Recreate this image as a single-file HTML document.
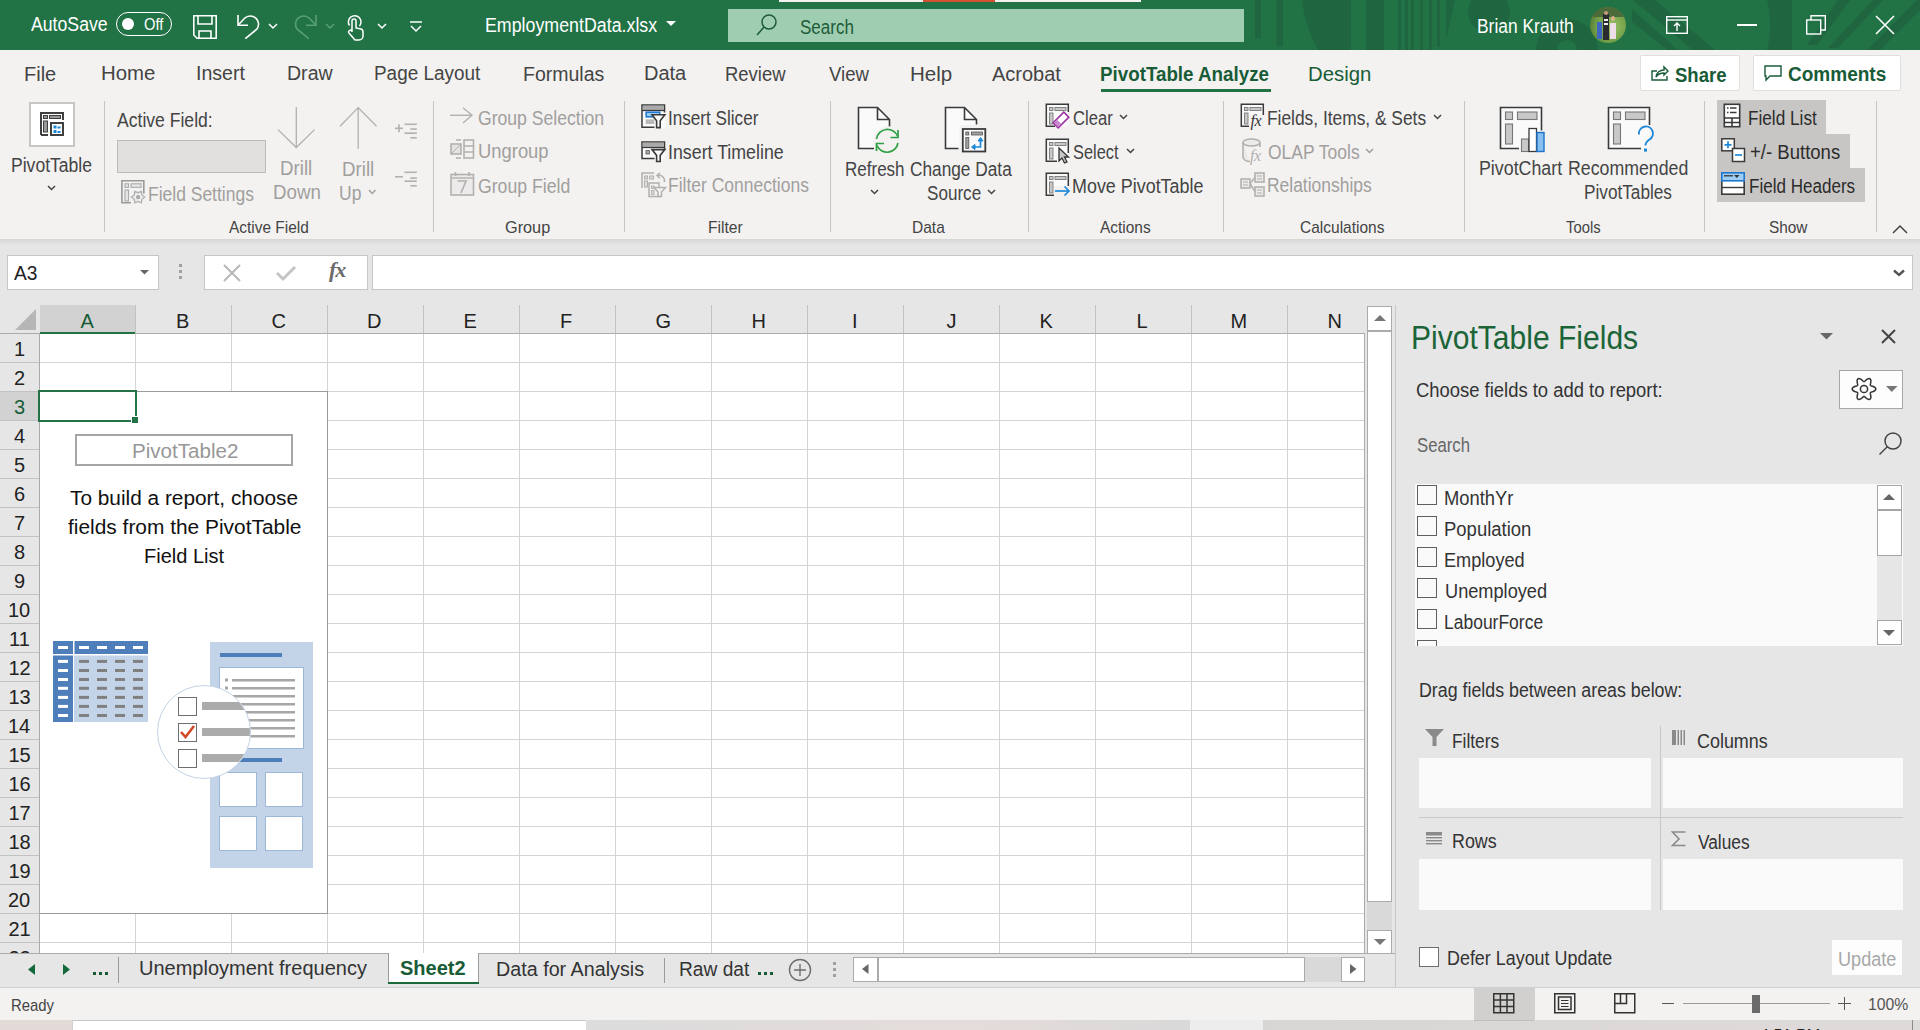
<!DOCTYPE html>
<html><head><meta charset="utf-8">
<style>
html,body{margin:0;padding:0;width:1920px;height:1030px;overflow:hidden;background:#f3f2f1;font-family:"Liberation Sans",sans-serif;}
.a{position:absolute;}
.t{position:absolute;white-space:nowrap;line-height:1;font-family:"Liberation Sans",sans-serif;}
svg{position:absolute;overflow:visible;}
</style></head><body>
<div class="a" style="left:0;top:0;width:1920px;height:50px;background:#217346;overflow:hidden">
<svg width="720" height="50" style="left:1200px;top:0">
 <g fill="#1f6640">
  <rect x="55" y="0" width="6" height="38"/><rect x="76.5" y="0" width="6.5" height="46"/>
  <path d="M102 0 H151 V50 H118 C110 35 104 18 102 0Z"/>
  <rect x="166" y="0" width="18" height="50"/>
  <rect x="198" y="0" width="3" height="50"/><rect x="205" y="0" width="3" height="50"/><rect x="211" y="0" width="3" height="50"/>
  <rect x="220" y="0" width="3" height="50"/><rect x="229" y="0" width="3" height="50"/><rect x="237" y="0" width="3" height="47"/>
  <path d="M246 0 H255 L246 40Z"/>
  <circle cx="289" cy="12" r="21"/>
  <path d="M367 50 m-31 0 a31 31 0 0 1 62 0 h-21 a10 10 0 0 0 -20 0Z"/>
  <path d="M433 0 H455 L515 50 H493Z"/>
  <path d="M432 9 L432 22 L467 50 L478 50Z"/>
  <path d="M567 0 H592 V50 H567 C571 34 571 16 567 0Z"/>
  <path d="M607 45 L617 45 L650 0 L638 0Z"/>
  <path d="M628 48 L638 48 L683 0 L673 0Z"/>
  <path d="M667 50 L680 50 L720 10 L720 0 L717 0Z"/>
 </g>
</svg>
<div class="t" style="left:31.00px;top:14px;font-size:20px;color:#fff;transform:scaleX(0.8837);transform-origin:0 0;">AutoSave</div><div class="a" style="left:116px;top:12px;width:54px;height:22px;border:1.3px solid #fff;border-radius:12px"></div>
<div class="a" style="left:122px;top:18px;width:12px;height:12px;border-radius:50%;background:#fff"></div><div class="t" style="left:144.14px;top:16px;font-size:17px;color:#fff;transform:scaleX(0.8636);transform-origin:0 0;">Off</div><svg width="24" height="24" style="left:193px;top:15px" fill="none" stroke="#fff" stroke-width="1.6">
 <path d="M0.8 0.8 H23.2 V23.2 H4 L0.8 20 Z"/><path d="M5 0.8 V9 H19 V0.8"/><path d="M6 23.2 V16 H18 V23.2"/>
</svg>
<svg width="24" height="24" style="left:236px;top:15px" fill="none" stroke="#fff" stroke-width="1.6">
 <path d="M2 0 V10.3 H12"/><path d="M2.5 9.8 L8.6 3.3 A8.2 8.2 0 0 1 20.8 14.2 L9.3 23.6"/>
</svg>
<svg width="10" height="6" style="left:268px;top:23px" fill="none" stroke="#fff" stroke-width="1.5"><path d="M1 1 L5 5 L9 1"/></svg>
<svg width="24" height="24" style="left:294px;top:15px" fill="none" stroke="#5a9e78" stroke-width="1.6">
 <path d="M22 0 V10.3 H12"/><path d="M21.5 9.8 L15.4 3.3 A8.2 8.2 0 0 0 3.2 14.2 L14.7 23.6"/>
</svg>
<svg width="10" height="6" style="left:325px;top:23px" fill="none" stroke="#5a9e78" stroke-width="1.5"><path d="M1 1 L5 5 L9 1"/></svg>
<svg width="20" height="26" style="left:346px;top:15px" fill="none" stroke="#fff" stroke-width="1.5">
 <path d="M3.5 10.5 A6.3 6.3 0 1 1 13.5 11"/><path d="M6 17 V6 A2 2 0 0 1 10 6 V13 L15 14 A3 3 0 0 1 17 17 V21 A4 4 0 0 1 13 25 H9 L3 18 A1.5 1.5 0 0 1 6 16"/>
</svg>
<svg width="10" height="6" style="left:377px;top:23px" fill="none" stroke="#fff" stroke-width="1.5"><path d="M1 1 L5 5 L9 1"/></svg>
<svg width="14" height="12" style="left:409px;top:21px" fill="none" stroke="#fff" stroke-width="1.5"><path d="M1 1 H13"/><path d="M2 5 L7 10 L12 5"/></svg>
<div class="t" style="left:485.22px;top:15px;font-size:20px;color:#fff;transform:scaleX(0.8901);transform-origin:0 0;">EmploymentData.xlsx</div><svg width="10" height="6" style="left:666px;top:21px"><path d="M0 0 H10 L5 5Z" fill="#fff"/></svg>
<div class="a" style="left:728px;top:9px;width:516px;height:33px;background:#9fcdb2"></div>
<svg width="22" height="22" style="left:756px;top:14px" fill="none" stroke="#1e5c38" stroke-width="1.5"><circle cx="13" cy="8" r="7"/><path d="M8 13 L1 21"/></svg>
<div class="t" style="left:800.15px;top:17px;font-size:20px;color:#1e5c38;transform:scaleX(0.8525);transform-origin:0 0;">Search</div><div class="a" style="left:779px;top:0;width:362px;height:2px;background:#f3f2f1"></div>
<div class="a" style="left:923px;top:0;width:72px;height:2px;background:#d35230"></div><div class="t" style="left:1477.26px;top:16px;font-size:20px;color:#fff;transform:scaleX(0.8704);transform-origin:0 0;">Brian Krauth</div><div class="a" style="left:1590px;top:7px;width:36px;height:36px;border-radius:50%;background:radial-gradient(circle at 60% 55%,#9cc56a,#6f9c45 55%,#3d5a2a);overflow:hidden">
 <div class="a" style="left:0;top:0;width:36px;height:10px;background:#4d6a3a"></div>
 <div class="a" style="left:13px;top:7px;width:6px;height:26px;background:#2a2a30"></div>
 <div class="a" style="left:14px;top:12px;width:4px;height:2px;background:#eee"></div><div class="a" style="left:14px;top:16px;width:4px;height:2px;background:#eee"></div>
 <div class="a" style="left:7px;top:15px;width:5px;height:17px;background:#3f66c0"></div>
 <div class="a" style="left:20px;top:16px;width:6px;height:16px;background:#ecdde6"></div>
 <div class="a" style="left:21px;top:9px;width:4px;height:5px;background:#d9b38c;border-radius:50%"></div>
 <div class="a" style="left:14px;top:4px;width:4px;height:4px;background:#c49a78;border-radius:50%"></div>
</div>
<svg width="22" height="18" style="left:1666px;top:16px" fill="none" stroke="#fff" stroke-width="1.4"><rect x="0.7" y="0.7" width="20.6" height="16.6"/><path d="M0.7 4 H21"/><path d="M11 15 V7 M8 10 L11 7 L14 10"/></svg>
<div class="a" style="left:1737px;top:24px;width:20px;height:1.5px;background:#fff"></div>
<svg width="20" height="20" style="left:1806px;top:15px" fill="none" stroke="#fff" stroke-width="1.4"><rect x="0.7" y="5" width="14" height="14"/><path d="M5 5 V0.7 H19.3 V15 H14.7"/></svg>
<svg width="20" height="20" style="left:1875px;top:15px" fill="none" stroke="#fff" stroke-width="1.6"><path d="M1 1 L19 19 M19 1 L1 19"/></svg>
</div>
<div class="a" style="left:0;top:50px;width:1920px;height:190px;background:#f3f2f1"></div><div class="t" style="left:24.00px;top:64px;font-size:20px;color:#444;">File</div><div class="t" style="left:100.96px;top:63px;font-size:20px;color:#444;transform:scaleX(1.0196);transform-origin:0 0;">Home</div><div class="t" style="left:196.04px;top:63px;font-size:20px;color:#444;transform:scaleX(0.9792);transform-origin:0 0;">Insert</div><div class="t" style="left:287.04px;top:63px;font-size:20px;color:#444;transform:scaleX(0.9778);transform-origin:0 0;">Draw</div><div class="t" style="left:374.11px;top:63px;font-size:20px;color:#444;transform:scaleX(0.9455);transform-origin:0 0;">Page Layout</div><div class="t" style="left:523.05px;top:64px;font-size:20px;color:#444;transform:scaleX(0.9753);transform-origin:0 0;">Formulas</div><div class="t" style="left:644.00px;top:63px;font-size:20px;color:#444;">Data</div><div class="t" style="left:725.16px;top:64px;font-size:20px;color:#444;transform:scaleX(0.9219);transform-origin:0 0;">Review</div><div class="t" style="left:829.00px;top:64px;font-size:20px;color:#444;transform:scaleX(0.9302);transform-origin:0 0;">View</div><div class="t" style="left:909.95px;top:64px;font-size:20px;color:#444;transform:scaleX(1.0263);transform-origin:0 0;">Help</div><div class="t" style="left:992.00px;top:64px;font-size:20px;color:#444;">Acrobat</div><div class="t" style="left:1307.97px;top:64px;font-size:20px;color:#185c37;transform:scaleX(1.0169);transform-origin:0 0;">Design</div><div class="t" style="left:1100.06px;top:64px;font-size:20px;color:#185c37;font-weight:700;transform:scaleX(0.9385);transform-origin:0 0;">PivotTable Analyze</div><div class="a" style="left:1101px;top:89px;width:170px;height:3px;background:#217346"></div><div class="a" style="left:1640px;top:55px;width:98px;height:34px;background:#fff;border:1px solid #e1dfdd;border-radius:2px"></div><div class="a" style="left:1753px;top:55px;width:146px;height:34px;background:#fff;border:1px solid #e1dfdd;border-radius:2px"></div><div class="t" style="left:1675.07px;top:65px;font-size:20px;color:#185c37;font-weight:700;transform:scaleX(0.9259);transform-origin:0 0;">Share</div><div class="t" style="left:1788.05px;top:64px;font-size:20px;color:#185c37;font-weight:700;transform:scaleX(0.9510);transform-origin:0 0;">Comments</div><svg width="18" height="16" style="left:1651px;top:65px" fill="none" stroke="#185c37" stroke-width="1.4"><path d="M6 6 H1 V15 H16 V11"/><path d="M5 12 C6 7 9 5 13 5 V2 L17 6 L13 10 V8 C10 8 7 9 5 12Z"/></svg>
<svg width="18" height="16" style="left:1764px;top:65px" fill="none" stroke="#185c37" stroke-width="1.4"><path d="M1 1 H17 V11 H6 L2 15 V11 H1 Z"/></svg>
<div class="a" style="left:104px;top:101px;width:1px;height:131px;background:#c8c6c4"></div><div class="a" style="left:433px;top:101px;width:1px;height:131px;background:#c8c6c4"></div><div class="a" style="left:624px;top:101px;width:1px;height:131px;background:#c8c6c4"></div><div class="a" style="left:830px;top:101px;width:1px;height:131px;background:#c8c6c4"></div><div class="a" style="left:1028px;top:101px;width:1px;height:131px;background:#c8c6c4"></div><div class="a" style="left:1223px;top:101px;width:1px;height:131px;background:#c8c6c4"></div><div class="a" style="left:1464px;top:101px;width:1px;height:131px;background:#c8c6c4"></div><div class="a" style="left:1704px;top:101px;width:1px;height:131px;background:#c8c6c4"></div><div class="a" style="left:1876px;top:101px;width:1px;height:131px;background:#c8c6c4"></div><div class="t" style="left:229.00px;top:219px;font-size:17px;color:#444;transform:scaleX(0.9080);transform-origin:0 0;">Active Field</div><div class="t" style="left:505.04px;top:219px;font-size:17px;color:#444;transform:scaleX(0.9565);transform-origin:0 0;">Group</div><div class="t" style="left:708.08px;top:219px;font-size:17px;color:#444;transform:scaleX(0.9189);transform-origin:0 0;">Filter</div><div class="t" style="left:912.09px;top:219px;font-size:17px;color:#444;transform:scaleX(0.9143);transform-origin:0 0;">Data</div><div class="t" style="left:1100.00px;top:219px;font-size:17px;color:#444;transform:scaleX(0.9091);transform-origin:0 0;">Actions</div><div class="t" style="left:1300.09px;top:219px;font-size:17px;color:#444;transform:scaleX(0.9121);transform-origin:0 0;">Calculations</div><div class="t" style="left:1566.00px;top:219px;font-size:17px;color:#444;transform:scaleX(0.8718);transform-origin:0 0;">Tools</div><div class="t" style="left:1769.10px;top:219px;font-size:17px;color:#444;transform:scaleX(0.9048);transform-origin:0 0;">Show</div><svg width="16" height="9" style="left:1892px;top:225px" fill="none" stroke="#444" stroke-width="1.5"><path d="M1 8 L8 1 L15 8"/></svg><div class="a" style="left:0;top:239px;width:1920px;height:6px;background:linear-gradient(#d6d5d4,#e6e6e6)"></div><div class="a" style="left:29px;top:102px;width:46px;height:45px;background:#fff;border:2px solid #c8c6c4;box-sizing:border-box"></div><svg width="26" height="26" style="left:39px;top:111px">
 <path d="M2 24 V2 H24 V9" fill="none" stroke="#404040" stroke-width="2"/><path d="M2 24 H9" fill="none" stroke="#404040" stroke-width="2"/>
 <rect x="4.5" y="4.5" width="4" height="3" fill="#999" stroke="#404040" stroke-width="1"/>
 <rect x="10.5" y="4.5" width="11" height="3" fill="#999" stroke="#404040" stroke-width="1"/>
 <rect x="4.5" y="10" width="4" height="11" fill="#999" stroke="#404040" stroke-width="1"/>
 <rect x="12" y="12" width="12" height="12" fill="#fff" stroke="#404040" stroke-width="2"/>
 <rect x="14.5" y="14.5" width="3" height="3" fill="#1e88d8"/><rect x="18.5" y="15.5" width="3" height="2" fill="#1e88d8"/>
 <rect x="14.5" y="19" width="3" height="3" fill="#1e88d8"/><rect x="18.5" y="20" width="3" height="2" fill="#1e88d8"/>
</svg><div class="t" style="left:11.24px;top:155px;font-size:20px;color:#444;transform:scaleX(0.8778);transform-origin:0 0;">PivotTable</div><svg width="9" height="6" style="left:47px;top:185px" fill="none" stroke="#444" stroke-width="1.5"><path d="M1 1 L4.5 4.5 L8 1"/></svg><div class="t" style="left:117.00px;top:110px;font-size:20px;color:#444;transform:scaleX(0.8785);transform-origin:0 0;">Active Field:</div><div class="a" style="left:117px;top:140px;width:147px;height:31px;background:#e1e0df;border:1px solid #bdbbb9"></div><svg width="28" height="28" style="left:120px;top:179px">
 <path d="M11 23.8 H1.9 V1.8 H23.8 V14.5" fill="none" stroke="#999" stroke-width="1.6"/>
 <g fill="#e6e6e6" stroke="#aaa" stroke-width="1.1"><rect x="5" y="4.8" width="3.5" height="3.5"/><rect x="11" y="4.8" width="10" height="3.5"/><rect x="5" y="11" width="3.5" height="11"/></g>
 <polygon points="24.70,18.10 21.91,15.90 21.40,12.38 18.10,13.70 14.80,12.38 14.29,15.90 11.50,18.10 14.29,20.30 14.80,23.82 18.10,22.50 21.40,23.82 21.91,20.30" fill="#eee" stroke="#b0b0b0" stroke-width="1.3"/><circle cx="18.1" cy="18.1" r="2.2" fill="#aaa"/>
</svg><div class="t" style="left:148.25px;top:184px;font-size:20px;color:#a19f9d;transform:scaleX(0.8739);transform-origin:0 0;">Field Settings</div><svg width="40" height="44" style="left:276px;top:106px" fill="none" stroke="#b3b0ad" stroke-width="1.3"><path d="M20.3 1 V42"/><path d="M2 23.6 L20.3 41.5 L38.5 23.6"/></svg><svg width="40" height="44" style="left:338px;top:106px" fill="none" stroke="#b3b0ad" stroke-width="1.3"><path d="M20.2 1.6 V42.7"/><path d="M2 20.3 L20.2 1.6 L38.5 20.3"/></svg><div class="t" style="left:280.13px;top:158px;font-size:20px;color:#a19f9d;transform:scaleX(0.9355);transform-origin:0 0;">Drill</div><div class="t" style="left:273.12px;top:182px;font-size:20px;color:#a19f9d;transform:scaleX(0.9375);transform-origin:0 0;">Down</div><div class="t" style="left:342.13px;top:159px;font-size:20px;color:#a19f9d;transform:scaleX(0.9355);transform-origin:0 0;">Drill</div><div class="t" style="left:339.12px;top:183px;font-size:20px;color:#a19f9d;transform:scaleX(0.8750);transform-origin:0 0;">Up</div><svg width="9" height="6" style="left:368px;top:189px" fill="none" stroke="#a19f9d" stroke-width="1.4"><path d="M1 1 L4.2 4.5 L7.5 1"/></svg><svg width="24" height="16" style="left:395px;top:123px" fill="#b3b0ad">
 <rect x="0" y="4.5" width="8" height="1.6"/><rect x="3.2" y="1.3" width="1.6" height="8"/>
 <rect x="9.5" y="0.5" width="12.3" height="1.6"/><rect x="15.4" y="5.3" width="6.4" height="1.6"/><rect x="9.5" y="9.4" width="12.3" height="1.6"/><rect x="15.4" y="14" width="6.4" height="1.6"/>
</svg><svg width="24" height="16" style="left:395px;top:171px" fill="#b3b0ad">
 <rect x="0" y="5" width="8" height="1.6"/>
 <rect x="9.5" y="0.5" width="12.3" height="1.6"/><rect x="15.4" y="6.3" width="6.4" height="1.6"/><rect x="9.5" y="9.4" width="12.3" height="1.6"/><rect x="15.4" y="14" width="6.4" height="1.6"/>
</svg><svg width="24" height="18" style="left:450px;top:107px" fill="none" stroke="#b3b0ad" stroke-width="1.4"><path d="M0 8.3 H22"/><path d="M13 0.7 L22 8.3 L13 16"/></svg><div class="t" style="left:478.12px;top:108px;font-size:20px;color:#a19f9d;transform:scaleX(0.8794);transform-origin:0 0;">Group Selection</div><svg width="25" height="20" style="left:450px;top:139px" fill="none" stroke="#b3b0ad" stroke-width="1.6">
 <rect x="1" y="5" width="10" height="10" fill="#e4e3e2"/><path d="M1 15 L11 5" stroke-width="1"/>
 <path d="M6 1 H11 M6 19 H11" /><rect x="14" y="1" width="9.5" height="18"/><path d="M14 7 H23.5 M14 13 H23.5"/>
</svg><div class="t" style="left:478.08px;top:141px;font-size:20px;color:#a19f9d;transform:scaleX(0.9200);transform-origin:0 0;">Ungroup</div><svg width="25" height="24" style="left:450px;top:172px" fill="none" stroke="#b3b0ad" stroke-width="1.6">
 <rect x="1" y="2.5" width="22.5" height="20.5" fill="#eceaea"/><path d="M1 6 H23.5" stroke-width="1.4"/><path d="M5.5 0 V4 M19 0 V4"/>
 <path d="M7.5 9 H16 L11 21" stroke-width="1.6"/>
</svg><div class="t" style="left:478.12px;top:176px;font-size:20px;color:#a19f9d;transform:scaleX(0.8824);transform-origin:0 0;">Group Field</div><svg width="26" height="28" style="left:641px;top:104px">
 <rect x="1" y="1" width="23" height="23" fill="#fafafa"/>
 <path d="M13.5 23.2 H1 V0.9 H23.5 V8.5" fill="none" stroke="#3a3a3a" stroke-width="1.5"/>
 <rect x="1.7" y="1.6" width="21.2" height="4.4" fill="#aaa"/><path d="M1 6.5 H23.5" stroke="#3a3a3a" stroke-width="1.2"/>
 <rect x="5.2" y="8.2" width="13.5" height="4.6" fill="#9fcdf2" stroke="#1e78d0" stroke-width="1.6"/>
 <rect x="4.7" y="15.4" width="8.7" height="4.6" fill="#b8b8b8"/>
 <path d="M11 10.8 H23.8 L19.2 16.8 V23.6 H15.6 V16.8 Z" fill="#fafafa" stroke="#3a3a3a" stroke-width="1.6" stroke-linejoin="miter"/>
</svg><div class="t" style="left:668.29px;top:108px;font-size:20px;color:#444;transform:scaleX(0.8558);transform-origin:0 0;">Insert Slicer</div><svg width="26" height="24" style="left:641px;top:141px">
 <rect x="1" y="1" width="23" height="17" fill="#fafafa"/>
 <path d="M13.5 17.5 H1 V0.9 H23.5 V8" fill="none" stroke="#3a3a3a" stroke-width="1.5"/>
 <rect x="1.7" y="1.6" width="21.2" height="4.4" fill="#aaa"/><path d="M1 6.5 H23.5" stroke="#3a3a3a" stroke-width="1.2"/>
 <rect x="5" y="9.6" width="3.4" height="3.4" fill="#aaa" stroke="#555" stroke-width="0.8"/>
 <path d="M11 8.6 H23.8 L19.2 14.4 V20.5 H15.6 V14.4 Z" fill="#fafafa" stroke="#3a3a3a" stroke-width="1.6" stroke-linejoin="miter"/>
</svg><div class="t" style="left:668.22px;top:142px;font-size:20px;color:#444;transform:scaleX(0.8898);transform-origin:0 0;">Insert Timeline</div><svg width="26" height="26" style="left:641px;top:172px" fill="none" stroke="#b3b0ad" stroke-width="1.5">
 <path d="M1 16 V1 H13"/><rect x="3.5" y="4" width="3" height="3" fill="#ddd" stroke-width="1"/><rect x="8.5" y="4" width="4" height="3" fill="#ddd" stroke-width="1"/><rect x="3.5" y="9" width="3" height="6" fill="#ddd" stroke-width="1"/>
 <rect x="8" y="11" width="10" height="13.5" fill="#f3f2f1"/><rect x="10.5" y="14" width="2.5" height="2.5" fill="#ddd" stroke-width="0.9"/><rect x="10.5" y="18.5" width="2.5" height="4" fill="#ddd" stroke-width="0.9"/>
 <path d="M13 15.5 H24.5 L20.5 20 V24.5 H17 V20 Z" fill="#f3f2f1"/>
 <path d="M16.5 3.5 C21 2.5 24 5.5 23.5 10"/><path d="M19 0.8 L16 3.5 L19 6.2"/>
</svg><div class="t" style="left:668.25px;top:175px;font-size:20px;color:#a19f9d;transform:scaleX(0.8742);transform-origin:0 0;">Filter Connections</div><svg width="48" height="50" style="left:857px;top:106px">
 <path d="M1.5 1.5 H21 L32.5 13 V42.5 H1.5 Z" fill="#fafafa"/>
 <path d="M17 42.5 H1.5 V1.5 H20.5 L32.5 13.5 V20.5 M20.5 1.5 V13.5 H32.5" fill="none" stroke="#3a3a3a" stroke-width="1.6"/>
 <circle cx="30.5" cy="34.6" r="14" fill="#f3f2f1"/>
 <path d="M19.5 33 A11 11 0 0 1 40.5 30" fill="none" stroke="#2ea043" stroke-width="1.7"/><path d="M33.5 31.5 H41 V24" fill="none" stroke="#2ea043" stroke-width="1.7"/>
 <path d="M41 37 A11 11 0 0 1 20 39.5" fill="none" stroke="#2ea043" stroke-width="1.7"/><path d="M27 37.5 H19.5 V45" fill="none" stroke="#2ea043" stroke-width="1.7"/>
</svg><div class="t" style="left:845.30px;top:159px;font-size:20px;color:#444;transform:scaleX(0.8507);transform-origin:0 0;">Refresh</div><svg width="9" height="6" style="left:870px;top:189px" fill="none" stroke="#444" stroke-width="1.5"><path d="M1 1 L4.5 4.5 L8 1"/></svg><svg width="44" height="50" style="left:944px;top:106px">
 <path d="M1.5 1.5 H21 L32.5 13 V42.5 H1.5 Z" fill="#fafafa"/>
 <path d="M14.5 42.5 H1.5 V1.5 H20.5 L32.5 13.5 V18.5 M20.5 1.5 V13.5 H32.5" fill="none" stroke="#3a3a3a" stroke-width="1.6"/>
 <rect x="15.5" y="19" width="27" height="27" fill="#f3f2f1"/>
 <rect x="18.8" y="23" width="22.5" height="22.5" fill="#fafafa" stroke="#3a3a3a" stroke-width="1.8"/>
 <rect x="21.8" y="26" width="3" height="3" fill="#a0a0a0" stroke="#555" stroke-width="0.8"/><rect x="27.5" y="26" width="11" height="3" fill="#a0a0a0" stroke="#555" stroke-width="0.8"/><rect x="21.8" y="31.5" width="3" height="11" fill="#a0a0a0" stroke="#555" stroke-width="0.8"/>
 <path d="M30 41 H36.5 V33" fill="none" stroke="#1e88d8" stroke-width="1.7"/><path d="M34 35 L36.5 31.5 L39 35 Z M31 38.5 L27.5 41 L31 43.5Z" fill="#1e88d8" stroke="#1e88d8" stroke-width="1"/>
</svg><div class="t" style="left:910.14px;top:159px;font-size:20px;color:#444;transform:scaleX(0.8632);transform-origin:0 0;">Change Data</div><div class="t" style="left:927.15px;top:183px;font-size:20px;color:#444;transform:scaleX(0.8548);transform-origin:0 0;">Source</div><svg width="9" height="6" style="left:987px;top:189px" fill="none" stroke="#444" stroke-width="1.5"><path d="M1 1 L4.5 4.5 L8 1"/></svg><svg width="26" height="26" style="left:1045px;top:103px">
 <rect x="1.5" y="1.5" width="22" height="22" fill="#fafafa"/>
 <path d="M10 23.3 H1.3 V1.3 H23.3 V9" fill="none" stroke="#3a3a3a" stroke-width="1.5"/>
 <g fill="#c8c8c8" stroke="#7a7a7a" stroke-width="0.9"><rect x="4.5" y="4.5" width="3.5" height="3"/><rect x="10" y="4.5" width="11" height="3"/><rect x="4.5" y="10" width="3.5" height="11"/></g>
 <rect x="10" y="12" width="15.5" height="8" fill="#f3f2f1" stroke="none" transform="rotate(-45 17 17)"/><g transform="rotate(-45 16 17)"><rect x="8.5" y="13.5" width="15" height="7" fill="#fff" stroke="#9b30a0" stroke-width="1.6"/><rect x="9" y="14" width="4.5" height="6" fill="#c98bce"/></g></svg><div class="t" style="left:1073.17px;top:108px;font-size:20px;color:#444;transform:scaleX(0.8298);transform-origin:0 0;">Clear</div><svg width="9" height="6" style="left:1119px;top:114px" fill="none" stroke="#444" stroke-width="1.5"><path d="M1 1 L4.5 4.5 L8 1"/></svg><svg width="26" height="26" style="left:1045px;top:138px">
 <rect x="1.5" y="1.5" width="22" height="22" fill="#fafafa"/>
 <path d="M12 23.3 H1.3 V1.3 H23.3 V15" fill="none" stroke="#3a3a3a" stroke-width="1.5"/>
 <g fill="#c8c8c8" stroke="#7a7a7a" stroke-width="0.9"><rect x="4.5" y="4.5" width="3.5" height="3"/><rect x="10" y="4.5" width="11" height="3"/><rect x="4.5" y="10" width="3.5" height="11"/></g>
 <path d="M14 10 V23 L17 20 L19.5 25 L22 24 L19.5 19 H23.5 Z" fill="#c8c8c8" stroke="#333" stroke-width="1.3"/></svg><div class="t" style="left:1073.18px;top:142px;font-size:20px;color:#444;transform:scaleX(0.8182);transform-origin:0 0;">Select</div><svg width="9" height="6" style="left:1126px;top:148px" fill="none" stroke="#444" stroke-width="1.5"><path d="M1 1 L4.5 4.5 L8 1"/></svg><svg width="26" height="26" style="left:1045px;top:172px">
 <rect x="1.5" y="1.5" width="22" height="22" fill="#fafafa"/>
 <path d="M12 23.3 H1.3 V1.3 H23.3 V15" fill="none" stroke="#3a3a3a" stroke-width="1.5"/>
 <g fill="#c8c8c8" stroke="#7a7a7a" stroke-width="0.9"><rect x="4.5" y="4.5" width="3.5" height="3"/><rect x="10" y="4.5" width="11" height="3"/><rect x="4.5" y="10" width="3.5" height="11"/></g>
 <rect x="9" y="14" width="17" height="11" fill="#f3f2f1"/><path d="M10 19 H24" fill="none" stroke="#1e88d8" stroke-width="1.7"/><path d="M19.5 14.5 L24 19 L19.5 23.5" fill="none" stroke="#1e88d8" stroke-width="1.7"/></svg><div class="t" style="left:1072.21px;top:176px;font-size:20px;color:#444;transform:scaleX(0.8958);transform-origin:0 0;">Move PivotTable</div><svg width="26" height="26" style="left:1240px;top:103px">
 <rect x="1.5" y="1.5" width="22" height="22" fill="#fafafa"/>
 <path d="M9 23.3 H1.3 V1.3 H23.3 V12" fill="none" stroke="#3a3a3a" stroke-width="1.5"/>
 <g fill="#c8c8c8" stroke="#7a7a7a" stroke-width="0.9"><rect x="4.5" y="4.5" width="3.5" height="3"/><rect x="10" y="4.5" width="11" height="3"/><rect x="4.5" y="10" width="3.5" height="11"/></g>
 <rect x="10" y="12" width="16" height="14" fill="#f3f2f1"/><text x="10.5" y="22.5" font-family="Liberation Serif" font-style="italic" font-size="16" fill="#333" letter-spacing="-0.5">fx</text></svg><div class="t" style="left:1267.27px;top:108px;font-size:20px;color:#444;transform:scaleX(0.8674);transform-origin:0 0;">Fields, Items, &amp; Sets</div><svg width="9" height="6" style="left:1433px;top:114px" fill="none" stroke="#444" stroke-width="1.5"><path d="M1 1 L4.5 4.5 L8 1"/></svg><svg width="26" height="26" style="left:1242px;top:138px" fill="none" stroke="#b3b0ad" stroke-width="1.6">
 <path d="M1 4 V19 C1 22 5 23.5 8 23.5" fill="#ebebeb"/><path d="M1 4 H18 V9" stroke="none" fill="#ebebeb"/><ellipse cx="9.5" cy="4.5" rx="8.5" ry="3.5" fill="#ebebeb"/><path d="M18 4.5 V9"/>
 <text x="8" y="23" font-family="Liberation Serif" font-style="italic" font-size="16" fill="#b3b0ad" stroke="none" letter-spacing="-0.5">fx</text></svg><div class="t" style="left:1268.13px;top:142px;font-size:20px;color:#a19f9d;transform:scaleX(0.8738);transform-origin:0 0;">OLAP Tools</div><svg width="9" height="6" style="left:1365px;top:148px" fill="none" stroke="#a19f9d" stroke-width="1.5"><path d="M1 1 L4.5 4.5 L8 1"/></svg><svg width="26" height="26" style="left:1240px;top:172px" fill="none" stroke="#b3b0ad" stroke-width="1.6">
 <rect x="1" y="7" width="9" height="9" fill="#ebebeb"/><rect x="15" y="1" width="9" height="9" fill="#ebebeb"/><rect x="15" y="15" width="9" height="9" fill="#ebebeb"/>
 <path d="M10 11.5 L15 5.5 M10 11.5 L15 19.5"/><path d="M3 10 H8 M3 13 H8 M17 4 H22 M17 7 H22 M17 18 H22 M17 21 H22" stroke-width="1.2"/></svg><div class="t" style="left:1267.26px;top:175px;font-size:20px;color:#a19f9d;transform:scaleX(0.8718);transform-origin:0 0;">Relationships</div><svg width="50" height="50" style="left:1499px;top:106px">
 <rect x="1.5" y="1.5" width="41" height="41" fill="#fafafa"/>
 <path d="M20 42.5 H1.5 V1.5 H42.5 V24.5" fill="none" stroke="#3a3a3a" stroke-width="1.6"/>
 <g fill="#c8c8c8" stroke="#777" stroke-width="1.1"><rect x="6.5" y="6" width="7" height="7.5"/><rect x="18.5" y="6" width="19.5" height="7.5"/><rect x="6.5" y="18" width="7" height="20"/>
 <rect x="22.5" y="33" width="7" height="12.5"/></g>
 <rect x="30" y="22.5" width="7.5" height="23" fill="#fff" stroke="#3a3a3a" stroke-width="1.3"/>
 <rect x="38" y="26.5" width="7" height="19" fill="#86bff0" stroke="#1e73c8" stroke-width="1.4"/>
</svg><div class="t" style="left:1479.22px;top:158px;font-size:20px;color:#444;transform:scaleX(0.8901);transform-origin:0 0;">PivotChart</div><svg width="50" height="50" style="left:1607px;top:106px">
 <rect x="1.5" y="1.5" width="41" height="41" fill="#fafafa"/>
 <path d="M34 42.5 H1.5 V1.5 H42.5 V19" fill="none" stroke="#3a3a3a" stroke-width="1.6"/>
 <g fill="#c8c8c8" stroke="#777" stroke-width="1.1"><rect x="6.5" y="6" width="7" height="7.5"/><rect x="18.5" y="6" width="19.5" height="7.5"/><rect x="6.5" y="18" width="7" height="20"/></g>
 <path d="M32 28.5 A7 7 0 1 1 42.5 33.5 C39.5 35.5 38.5 37 38.5 39.5" fill="none" stroke="#1e88d8" stroke-width="1.9"/>
 <rect x="37" y="42.6" width="3" height="3" fill="#1e88d8"/>
</svg><div class="t" style="left:1568.23px;top:158px;font-size:20px;color:#444;transform:scaleX(0.8872);transform-origin:0 0;">Recommended</div><div class="t" style="left:1584.28px;top:182px;font-size:20px;color:#444;transform:scaleX(0.8600);transform-origin:0 0;">PivotTables</div><div class="a" style="left:1717px;top:100px;width:109px;height:34px;background:#c8c6c4"></div><div class="a" style="left:1717px;top:134px;width:133px;height:34px;background:#c8c6c4"></div><div class="a" style="left:1717px;top:168px;width:148px;height:34px;background:#c8c6c4"></div><svg width="18" height="25" style="left:1723px;top:103px" fill="none" stroke="#3a3a3a" stroke-width="1.6">
 <rect x="1.3" y="1.3" width="15.4" height="22.4" fill="#fff"/><path d="M1.3 15 H16.7 M1.3 19.5 H16.7 M9 15 V23.7"/><path d="M4 5 H5.5 M7 5 H13.5 M4 9.5 H5.5 M7 9.5 H13.5" stroke-width="1.4"/></svg><div class="t" style="left:1748.28px;top:108px;font-size:20px;color:#2b2b2b;transform:scaleX(0.8590);transform-origin:0 0;">Field List</div><svg width="26" height="26" style="left:1720px;top:137px">
 <rect x="1.8" y="1.8" width="12.5" height="12" fill="#fff" stroke="#3a3a3a" stroke-width="1.5"/><path d="M4.5 7.8 H11.5 M8 4.3 V11.3" stroke="#1e88d8" stroke-width="1.7"/>
 <rect x="12.5" y="11.5" width="12" height="13" fill="#fff" stroke="#3a3a3a" stroke-width="1.5"/><path d="M15 18 H22" stroke="#1e88d8" stroke-width="1.7"/></svg><div class="t" style="left:1750.07px;top:142px;font-size:20px;color:#2b2b2b;transform:scaleX(0.9271);transform-origin:0 0;">+/- Buttons</div><svg width="26" height="25" style="left:1720px;top:171px">
 <rect x="1.8" y="1.8" width="22.4" height="21.4" fill="#fff" stroke="#3a3a3a" stroke-width="1.6"/><rect x="1.8" y="1.8" width="22.4" height="8" fill="#9fcdf2" stroke="#1e78d0" stroke-width="1.6"/>
 <path d="M4 4.8 H13" stroke="#333" stroke-width="1.3"/><path d="M14 4 H19.5 L16.8 7Z" fill="#333"/>
 <path d="M1.8 16.5 H24.2" stroke="#3a3a3a" stroke-width="1.4"/></svg><div class="t" style="left:1749.30px;top:176px;font-size:20px;color:#2b2b2b;transform:scaleX(0.8525);transform-origin:0 0;">Field Headers</div><div class="a" style="left:0;top:245px;width:1920px;height:60px;background:#e6e6e6"></div><div class="a" style="left:7px;top:255px;width:150px;height:33px;background:#fff;border:1px solid #c6c6c6"></div><div class="t" style="left:14.00px;top:263px;font-size:20px;color:#222;transform:scaleX(0.9583);transform-origin:0 0;">A3</div><svg width="9" height="5" style="left:140px;top:270px"><path d="M0 0 H9 L4.5 4.5Z" fill="#666"/></svg><div class="a" style="left:179px;top:264px;width:3px;height:3px;background:#a0a0a0"></div><div class="a" style="left:179px;top:270px;width:3px;height:3px;background:#a0a0a0"></div><div class="a" style="left:179px;top:276px;width:3px;height:3px;background:#a0a0a0"></div><div class="a" style="left:204px;top:255px;width:162px;height:33px;background:#fff;border:1px solid #c6c6c6"></div><svg width="18" height="18" style="left:223px;top:264px" fill="none" stroke="#b8b8b8" stroke-width="2"><path d="M1 1 L17 17 M17 1 L1 17"/></svg><svg width="20" height="16" style="left:276px;top:265px" fill="none" stroke="#c4c4c4" stroke-width="3"><path d="M1 8 L7 14 L19 2"/></svg><div class="t" style="left:329px;top:259px;font-size:22px;font-family:'Liberation Serif';font-style:italic;font-weight:700;color:#6b6b6b;letter-spacing:-1px">fx</div><div class="a" style="left:372px;top:255px;width:1541px;height:35px;background:#fff;border:1px solid #c6c6c6;box-sizing:border-box"></div><svg width="12" height="8" style="left:1893px;top:269px" fill="none" stroke="#555" stroke-width="2.4"><path d="M1 1.5 L6 6 L11 1.5"/></svg><div class="a" style="left:0;top:333px;width:1365px;height:620px;background:#fff"></div><div class="a" style="left:0;top:333px;width:39px;height:620px;background:#e6e6e6"></div><div class="a" style="left:0;top:305px;width:1365px;height:28px;background:#e6e6e6"></div><div class="a" style="left:40px;top:305px;width:95px;height:28px;background:#d2d2d2"></div><div class="a" style="left:135px;top:305px;width:1px;height:28px;background:#c2c2c2"></div><div class="a" style="left:231px;top:305px;width:1px;height:28px;background:#c2c2c2"></div><div class="a" style="left:327px;top:305px;width:1px;height:28px;background:#c2c2c2"></div><div class="a" style="left:423px;top:305px;width:1px;height:28px;background:#c2c2c2"></div><div class="a" style="left:519px;top:305px;width:1px;height:28px;background:#c2c2c2"></div><div class="a" style="left:615px;top:305px;width:1px;height:28px;background:#c2c2c2"></div><div class="a" style="left:711px;top:305px;width:1px;height:28px;background:#c2c2c2"></div><div class="a" style="left:807px;top:305px;width:1px;height:28px;background:#c2c2c2"></div><div class="a" style="left:903px;top:305px;width:1px;height:28px;background:#c2c2c2"></div><div class="a" style="left:999px;top:305px;width:1px;height:28px;background:#c2c2c2"></div><div class="a" style="left:1095px;top:305px;width:1px;height:28px;background:#c2c2c2"></div><div class="a" style="left:1191px;top:305px;width:1px;height:28px;background:#c2c2c2"></div><div class="a" style="left:1287px;top:305px;width:1px;height:28px;background:#c2c2c2"></div><div class="t" style="left:80.50px;top:311px;font-size:20px;color:#185c37;">A</div><div class="t" style="left:176.00px;top:311px;font-size:20px;color:#222;">B</div><div class="t" style="left:271.50px;top:311px;font-size:20px;color:#222;">C</div><div class="t" style="left:367.00px;top:311px;font-size:20px;color:#222;">D</div><div class="t" style="left:463.50px;top:311px;font-size:20px;color:#222;">E</div><div class="t" style="left:560.00px;top:311px;font-size:20px;color:#222;">F</div><div class="t" style="left:655.50px;top:311px;font-size:20px;color:#222;">G</div><div class="t" style="left:751.50px;top:311px;font-size:20px;color:#222;">H</div><div class="t" style="left:852.00px;top:311px;font-size:20px;color:#222;">I</div><div class="t" style="left:946.50px;top:311px;font-size:20px;color:#222;">J</div><div class="t" style="left:1039.50px;top:311px;font-size:20px;color:#222;">K</div><div class="t" style="left:1136.50px;top:311px;font-size:20px;color:#222;">L</div><div class="t" style="left:1230.50px;top:311px;font-size:20px;color:#222;">M</div><div class="t" style="left:1327.50px;top:311px;font-size:20px;color:#222;">N</div><div class="a" style="left:0;top:333px;width:1365px;height:1px;background:#ababab"></div><div class="a" style="left:40px;top:332px;width:95px;height:2px;background:#217346"></div><svg width="22" height="22" style="left:15px;top:309px"><path d="M21 0 V21 H0Z" fill="#b6b6b6"/></svg><div class="a" style="left:135px;top:334px;width:1px;height:619px;background:#d4d4d4"></div><div class="a" style="left:231px;top:334px;width:1px;height:619px;background:#d4d4d4"></div><div class="a" style="left:327px;top:334px;width:1px;height:619px;background:#d4d4d4"></div><div class="a" style="left:423px;top:334px;width:1px;height:619px;background:#d4d4d4"></div><div class="a" style="left:519px;top:334px;width:1px;height:619px;background:#d4d4d4"></div><div class="a" style="left:615px;top:334px;width:1px;height:619px;background:#d4d4d4"></div><div class="a" style="left:711px;top:334px;width:1px;height:619px;background:#d4d4d4"></div><div class="a" style="left:807px;top:334px;width:1px;height:619px;background:#d4d4d4"></div><div class="a" style="left:903px;top:334px;width:1px;height:619px;background:#d4d4d4"></div><div class="a" style="left:999px;top:334px;width:1px;height:619px;background:#d4d4d4"></div><div class="a" style="left:1095px;top:334px;width:1px;height:619px;background:#d4d4d4"></div><div class="a" style="left:1191px;top:334px;width:1px;height:619px;background:#d4d4d4"></div><div class="a" style="left:1287px;top:334px;width:1px;height:619px;background:#d4d4d4"></div><div class="a" style="left:0;top:392px;width:39px;height:28px;background:#d2d2d2"></div><div class="a" style="left:39px;top:362px;width:1326px;height:1px;background:#d4d4d4"></div><div class="a" style="left:0;top:362px;width:39px;height:1px;background:#c2c2c2"></div><div class="a" style="left:39px;top:391px;width:1326px;height:1px;background:#d4d4d4"></div><div class="a" style="left:0;top:391px;width:39px;height:1px;background:#c2c2c2"></div><div class="a" style="left:39px;top:420px;width:1326px;height:1px;background:#d4d4d4"></div><div class="a" style="left:0;top:420px;width:39px;height:1px;background:#c2c2c2"></div><div class="a" style="left:39px;top:449px;width:1326px;height:1px;background:#d4d4d4"></div><div class="a" style="left:0;top:449px;width:39px;height:1px;background:#c2c2c2"></div><div class="a" style="left:39px;top:478px;width:1326px;height:1px;background:#d4d4d4"></div><div class="a" style="left:0;top:478px;width:39px;height:1px;background:#c2c2c2"></div><div class="a" style="left:39px;top:507px;width:1326px;height:1px;background:#d4d4d4"></div><div class="a" style="left:0;top:507px;width:39px;height:1px;background:#c2c2c2"></div><div class="a" style="left:39px;top:536px;width:1326px;height:1px;background:#d4d4d4"></div><div class="a" style="left:0;top:536px;width:39px;height:1px;background:#c2c2c2"></div><div class="a" style="left:39px;top:565px;width:1326px;height:1px;background:#d4d4d4"></div><div class="a" style="left:0;top:565px;width:39px;height:1px;background:#c2c2c2"></div><div class="a" style="left:39px;top:594px;width:1326px;height:1px;background:#d4d4d4"></div><div class="a" style="left:0;top:594px;width:39px;height:1px;background:#c2c2c2"></div><div class="a" style="left:39px;top:623px;width:1326px;height:1px;background:#d4d4d4"></div><div class="a" style="left:0;top:623px;width:39px;height:1px;background:#c2c2c2"></div><div class="a" style="left:39px;top:652px;width:1326px;height:1px;background:#d4d4d4"></div><div class="a" style="left:0;top:652px;width:39px;height:1px;background:#c2c2c2"></div><div class="a" style="left:39px;top:681px;width:1326px;height:1px;background:#d4d4d4"></div><div class="a" style="left:0;top:681px;width:39px;height:1px;background:#c2c2c2"></div><div class="a" style="left:39px;top:710px;width:1326px;height:1px;background:#d4d4d4"></div><div class="a" style="left:0;top:710px;width:39px;height:1px;background:#c2c2c2"></div><div class="a" style="left:39px;top:739px;width:1326px;height:1px;background:#d4d4d4"></div><div class="a" style="left:0;top:739px;width:39px;height:1px;background:#c2c2c2"></div><div class="a" style="left:39px;top:768px;width:1326px;height:1px;background:#d4d4d4"></div><div class="a" style="left:0;top:768px;width:39px;height:1px;background:#c2c2c2"></div><div class="a" style="left:39px;top:797px;width:1326px;height:1px;background:#d4d4d4"></div><div class="a" style="left:0;top:797px;width:39px;height:1px;background:#c2c2c2"></div><div class="a" style="left:39px;top:826px;width:1326px;height:1px;background:#d4d4d4"></div><div class="a" style="left:0;top:826px;width:39px;height:1px;background:#c2c2c2"></div><div class="a" style="left:39px;top:855px;width:1326px;height:1px;background:#d4d4d4"></div><div class="a" style="left:0;top:855px;width:39px;height:1px;background:#c2c2c2"></div><div class="a" style="left:39px;top:884px;width:1326px;height:1px;background:#d4d4d4"></div><div class="a" style="left:0;top:884px;width:39px;height:1px;background:#c2c2c2"></div><div class="a" style="left:39px;top:913px;width:1326px;height:1px;background:#d4d4d4"></div><div class="a" style="left:0;top:913px;width:39px;height:1px;background:#c2c2c2"></div><div class="a" style="left:39px;top:942px;width:1326px;height:1px;background:#d4d4d4"></div><div class="a" style="left:0;top:942px;width:39px;height:1px;background:#c2c2c2"></div><div class="t" style="left:14.00px;top:339px;font-size:20px;color:#222;">1</div><div class="t" style="left:14.00px;top:368px;font-size:20px;color:#222;">2</div><div class="t" style="left:14.00px;top:397px;font-size:20px;color:#185c37;">3</div><div class="t" style="left:14.00px;top:426px;font-size:20px;color:#222;">4</div><div class="t" style="left:14.00px;top:455px;font-size:20px;color:#222;">5</div><div class="t" style="left:14.00px;top:484px;font-size:20px;color:#222;">6</div><div class="t" style="left:14.00px;top:513px;font-size:20px;color:#222;">7</div><div class="t" style="left:14.00px;top:542px;font-size:20px;color:#222;">8</div><div class="t" style="left:14.00px;top:571px;font-size:20px;color:#222;">9</div><div class="t" style="left:8.00px;top:600px;font-size:20px;color:#222;">10</div><div class="t" style="left:9.00px;top:629px;font-size:20px;color:#222;">11</div><div class="t" style="left:8.50px;top:658px;font-size:20px;color:#222;">12</div><div class="t" style="left:8.50px;top:687px;font-size:20px;color:#222;">13</div><div class="t" style="left:8.00px;top:716px;font-size:20px;color:#222;">14</div><div class="t" style="left:8.50px;top:745px;font-size:20px;color:#222;">15</div><div class="t" style="left:8.50px;top:774px;font-size:20px;color:#222;">16</div><div class="t" style="left:8.50px;top:803px;font-size:20px;color:#222;">17</div><div class="t" style="left:8.50px;top:832px;font-size:20px;color:#222;">18</div><div class="t" style="left:8.50px;top:861px;font-size:20px;color:#222;">19</div><div class="t" style="left:8.00px;top:890px;font-size:20px;color:#222;">20</div><div class="t" style="left:8.50px;top:919px;font-size:20px;color:#222;">21</div><div class="a" style="left:0;top:943px;width:39px;height:10px;overflow:hidden"><div class="t" style="left:8.50px;top:5px;font-size:20px;color:#222;">22</div></div><div class="a" style="left:39px;top:333px;width:1px;height:620px;background:#ababab"></div><div class="a" style="left:1364px;top:333px;width:1px;height:620px;background:#ababab"></div><div class="a" style="left:40px;top:391px;width:287px;height:522px;background:#fff;border-top:1px solid #9b9b9b;border-right:1px solid #9b9b9b;border-bottom:1px solid #9b9b9b;box-sizing:border-box;width:288px;height:523px"></div><div class="a" style="left:75px;top:434px;width:218px;height:32px;border:2px solid #a6a6a6;box-sizing:border-box"></div><div class="t" style="left:131.94px;top:441px;font-size:20px;color:#979797;transform:scaleX(1.0297);transform-origin:0 0;">PivotTable2</div><div class="t" style="left:70.00px;top:488px;font-size:20px;color:#111;transform:scaleX(1.0413);transform-origin:0 0;">To build a report, choose</div><div class="t" style="left:68.00px;top:517px;font-size:20px;color:#111;transform:scaleX(1.0448);transform-origin:0 0;">fields from the PivotTable</div><div class="t" style="left:144.00px;top:546px;font-size:20px;color:#111;">Field List</div><div class="a" style="left:38px;top:390px;width:99px;height:32px;border:2px solid #217346;box-sizing:border-box"></div><div class="a" style="left:131px;top:416px;width:8px;height:8px;background:#fff"></div><div class="a" style="left:132px;top:417px;width:6px;height:6px;background:#217346"></div><svg width="270" height="240" style="left:50px;top:638px">
 <rect x="3" y="3" width="95" height="81" fill="#4f7fba"/>
 <rect x="24.5" y="17" width="73.5" height="67" fill="#c3d3e8"/>
 <rect x="23" y="3" width="1.5" height="81" fill="#fff"/><rect x="3" y="16" width="95" height="1.5" fill="#fff"/>
 <g fill="#fff"><rect x="8" y="8" width="10" height="3"/><rect x="29" y="8" width="10" height="3"/><rect x="47" y="8" width="10" height="3"/><rect x="65" y="8" width="10" height="3"/><rect x="83" y="8" width="10" height="3"/></g>
 <g fill="#fff"><rect x="8" y="21.9" width="10" height="3"/><rect x="8" y="31.0" width="10" height="3"/><rect x="8" y="40.0" width="10" height="3"/><rect x="8" y="48.8" width="10" height="3"/><rect x="8" y="57.9" width="10" height="3"/><rect x="8" y="66.9" width="10" height="3"/><rect x="8" y="76.0" width="10" height="3"/></g>
 <g fill="#808080"><rect x="29" y="21.9" width="10" height="3"/><rect x="47" y="21.9" width="10" height="3"/><rect x="65" y="21.9" width="10" height="3"/><rect x="83" y="21.9" width="10" height="3"/><rect x="29" y="31.0" width="10" height="3"/><rect x="47" y="31.0" width="10" height="3"/><rect x="65" y="31.0" width="10" height="3"/><rect x="83" y="31.0" width="10" height="3"/><rect x="29" y="40.0" width="10" height="3"/><rect x="47" y="40.0" width="10" height="3"/><rect x="65" y="40.0" width="10" height="3"/><rect x="83" y="40.0" width="10" height="3"/><rect x="29" y="48.8" width="10" height="3"/><rect x="47" y="48.8" width="10" height="3"/><rect x="65" y="48.8" width="10" height="3"/><rect x="83" y="48.8" width="10" height="3"/><rect x="29" y="57.9" width="10" height="3"/><rect x="47" y="57.9" width="10" height="3"/><rect x="65" y="57.9" width="10" height="3"/><rect x="83" y="57.9" width="10" height="3"/><rect x="29" y="66.9" width="10" height="3"/><rect x="47" y="66.9" width="10" height="3"/><rect x="65" y="66.9" width="10" height="3"/><rect x="83" y="66.9" width="10" height="3"/><rect x="29" y="76.0" width="10" height="3"/><rect x="47" y="76.0" width="10" height="3"/><rect x="65" y="76.0" width="10" height="3"/><rect x="83" y="76.0" width="10" height="3"/></g>
 <rect x="160" y="4" width="103" height="226" fill="#c3d3e8"/>
 <rect x="170" y="15" width="62" height="4" fill="#4f7fba"/>
 <rect x="169.5" y="29.5" width="84" height="81" fill="#fff" stroke="#9fb7d6" stroke-width="1"/>
 <g fill="#a6a6a6"><rect x="175" y="40.5" width="3" height="3"/><rect x="175" y="48.5" width="3" height="3"/><rect x="182" y="41" width="63" height="2.5"/><rect x="182" y="49" width="63" height="2.5"/><rect x="182" y="57" width="63" height="2.5"/><rect x="182" y="65" width="63" height="2.5"/><rect x="182" y="73" width="63" height="2.5"/><rect x="182" y="81" width="63" height="2.5"/><rect x="182" y="89" width="63" height="2.5"/><rect x="182" y="97" width="63" height="2.5"/></g>
 <rect x="170" y="120" width="62" height="4" fill="#4f7fba"/>
 <rect x="169.5" y="134.5" width="37" height="34" fill="#fff" stroke="#9fb7d6"/><rect x="215.5" y="134.5" width="37" height="34" fill="#fff" stroke="#9fb7d6"/>
 <rect x="169.5" y="178.5" width="37" height="34" fill="#fff" stroke="#9fb7d6"/><rect x="215.5" y="178.5" width="37" height="34" fill="#fff" stroke="#9fb7d6"/>
 <circle cx="154" cy="94" r="46.5" fill="#fff" stroke="#c3d3e8" stroke-width="1"/>
 <clipPath id="mag"><circle cx="154" cy="94" r="46"/></clipPath><g clip-path="url(#mag)">
  <rect x="152" y="64" width="50" height="8" fill="#ababab"/><rect x="152" y="90" width="50" height="8" fill="#ababab"/><rect x="152" y="116" width="50" height="8" fill="#ababab"/>
 </g>
 <rect x="128.5" y="59.5" width="18" height="18" fill="#fff" stroke="#6e6e6e" stroke-width="1"/>
 <rect x="128.5" y="85.5" width="18" height="18" fill="#fff" stroke="#6e6e6e" stroke-width="1"/>
 <rect x="128.5" y="111.5" width="18" height="18" fill="#fff" stroke="#6e6e6e" stroke-width="1"/>
 <path d="M131 94 L135.5 99 L144 88" fill="none" stroke="#d24726" stroke-width="2.6"/>
</svg><div class="a" style="left:1365px;top:305px;width:30px;height:648px;background:#e6e6e6"></div><div class="a" style="left:1367px;top:306px;width:23px;height:23px;background:#fff;border:1px solid #ababab"></div><svg width="12" height="7" style="left:1374px;top:315px"><path d="M0 6 L6 0 L12 6Z" fill="#777"/></svg><div class="a" style="left:1367px;top:331px;width:25px;height:600px;background:#d9d9d9"></div><div class="a" style="left:1367px;top:331px;width:23px;height:569px;background:#fff;border:1px solid #ababab"></div><div class="a" style="left:1367px;top:930px;width:23px;height:22px;background:#fff;border:1px solid #ababab"></div><svg width="12" height="7" style="left:1374px;top:939px"><path d="M0 0 L12 0 L6 6Z" fill="#777"/></svg><div class="a" style="left:1395px;top:305px;width:525px;height:683px;background:#e6e6e6;border-left:1px solid #c8c8c8"></div><div class="t" style="left:1411.27px;top:321px;font-size:33px;color:#1a6438;transform:scaleX(0.9106);transform-origin:0 0;">PivotTable Fields</div><svg width="13" height="7" style="left:1820px;top:333px"><path d="M0 0 H13 L6.5 6.5Z" fill="#666"/></svg><svg width="15" height="15" style="left:1881px;top:329px" fill="none" stroke="#444" stroke-width="2"><path d="M1 1 L14 14 M14 1 L1 14"/></svg><div class="t" style="left:1416.08px;top:380px;font-size:20px;color:#333;transform:scaleX(0.9208);transform-origin:0 0;">Choose fields to add to report:</div><div class="a" style="left:1839px;top:370px;width:64px;height:39px;background:#fdfdfd;border:1px solid #a6a6a6;box-sizing:border-box"></div><svg width="26" height="24" style="left:1851px;top:377px" fill="none" stroke="#333" stroke-width="1.5" stroke-linejoin="round">
 <polygon points="24.80,12.00 24.61,11.24 24.06,10.54 23.24,9.96 22.27,9.52 21.29,9.18 20.43,8.92 19.79,8.65 19.41,8.30 19.29,7.80 19.38,7.10 19.58,6.23 19.79,5.21 19.88,4.15 19.79,3.15 19.46,2.33 18.90,1.78 18.14,1.57 17.27,1.69 16.36,2.11 15.48,2.73 14.71,3.41 14.05,4.02 13.49,4.45 13.00,4.60 12.51,4.45 11.95,4.02 11.29,3.41 10.52,2.73 9.64,2.11 8.73,1.69 7.86,1.57 7.10,1.78 6.54,2.33 6.21,3.15 6.12,4.15 6.21,5.21 6.42,6.23 6.62,7.10 6.71,7.80 6.59,8.30 6.21,8.65 5.57,8.92 4.71,9.18 3.73,9.52 2.76,9.96 1.94,10.54 1.39,11.24 1.20,12.00 1.39,12.76 1.94,13.46 2.76,14.04 3.73,14.48 4.71,14.82 5.57,15.08 6.21,15.35 6.59,15.70 6.71,16.20 6.62,16.90 6.42,17.77 6.21,18.79 6.12,19.85 6.21,20.85 6.54,21.67 7.10,22.22 7.86,22.43 8.73,22.31 9.64,21.89 10.52,21.27 11.29,20.59 11.95,19.98 12.51,19.55 13.00,19.40 13.49,19.55 14.05,19.98 14.71,20.59 15.48,21.27 16.36,21.89 17.27,22.31 18.14,22.43 18.90,22.22 19.46,21.67 19.79,20.85 19.88,19.85 19.79,18.79 19.58,17.77 19.38,16.90 19.29,16.20 19.41,15.70 19.79,15.35 20.43,15.08 21.29,14.82 22.27,14.48 23.24,14.04 24.06,13.46 24.61,12.76"/>
 <circle cx="13" cy="12" r="3.6"/></svg><svg width="12" height="7" style="left:1886px;top:386px"><path d="M0 0 H11.5 L5.75 6Z" fill="#777"/></svg><div class="t" style="left:1417.16px;top:435px;font-size:20px;color:#666;transform:scaleX(0.8361);transform-origin:0 0;">Search</div><svg width="24" height="24" style="left:1878px;top:432px" fill="none" stroke="#444" stroke-width="1.5"><circle cx="15" cy="9" r="8"/><path d="M9.5 14.5 L1.5 22.5"/></svg><div class="a" style="left:1415px;top:484px;width:488px;height:162px;background:#fafafa;overflow:hidden"><div class="a" style="left:2px;top:1px;width:18px;height:18px;border:1px solid #5f5f5f"></div><div class="a" style="left:2px;top:32px;width:18px;height:18px;border:1px solid #5f5f5f"></div><div class="a" style="left:2px;top:63px;width:18px;height:18px;border:1px solid #5f5f5f"></div><div class="a" style="left:2px;top:94px;width:18px;height:18px;border:1px solid #5f5f5f"></div><div class="a" style="left:2px;top:125px;width:18px;height:18px;border:1px solid #5f5f5f"></div><div class="a" style="left:2px;top:156px;width:18px;height:18px;border:1px solid #5f5f5f"></div></div><div class="t" style="left:1444.16px;top:488px;font-size:20px;color:#333;transform:scaleX(0.9189);transform-origin:0 0;">MonthYr</div><div class="t" style="left:1444.15px;top:519px;font-size:20px;color:#333;transform:scaleX(0.9239);transform-origin:0 0;">Population</div><div class="t" style="left:1444.19px;top:550px;font-size:20px;color:#333;transform:scaleX(0.9070);transform-origin:0 0;">Employed</div><div class="t" style="left:1445.09px;top:581px;font-size:20px;color:#333;transform:scaleX(0.9091);transform-origin:0 0;">Unemployed</div><div class="t" style="left:1444.25px;top:612px;font-size:20px;color:#333;transform:scaleX(0.8739);transform-origin:0 0;">LabourForce</div><div class="a" style="left:1877px;top:485px;width:25px;height:160px;background:#e6e6e6"></div><div class="a" style="left:1877px;top:485px;width:23px;height:23px;background:#fff;border:1px solid #a6a6a6"></div><svg width="12" height="7" style="left:1883px;top:494px"><path d="M0 6 L6 0 L12 6Z" fill="#666"/></svg><div class="a" style="left:1877px;top:510px;width:23px;height:44px;background:#fff;border:1px solid #a6a6a6"></div><div class="a" style="left:1877px;top:620px;width:23px;height:23px;background:#fff;border:1px solid #a6a6a6"></div><svg width="12" height="7" style="left:1883px;top:630px"><path d="M0 0 H12 L6 6Z" fill="#666"/></svg><div class="t" style="left:1419.22px;top:680px;font-size:20px;color:#333;transform:scaleX(0.8904);transform-origin:0 0;">Drag fields between areas below:</div><div class="a" style="left:1660px;top:726px;width:1px;height:184px;background:#c8c8c8"></div><div class="a" style="left:1419px;top:817px;width:484px;height:1px;background:#c8c8c8"></div><div class="a" style="left:1419px;top:758px;width:232px;height:50px;background:#fafafa"></div><div class="a" style="left:1663px;top:758px;width:240px;height:50px;background:#fafafa"></div><div class="a" style="left:1419px;top:859px;width:232px;height:51px;background:#fafafa"></div><div class="a" style="left:1663px;top:859px;width:240px;height:51px;background:#fafafa"></div><svg width="19" height="17" style="left:1425px;top:729px"><path d="M0 0 H19 L11.5 8 V17 H7.5 V8 Z" fill="#8a8a8a"/></svg><div class="t" style="left:1452.27px;top:731px;font-size:20px;color:#333;transform:scaleX(0.8654);transform-origin:0 0;">Filters</div><svg width="14" height="15" style="left:1672px;top:730px" fill="#8a8a8a"><rect x="0" y="0" width="4" height="15"/><rect x="5.5" y="0" width="1.5" height="15"/><rect x="8.5" y="0" width="1.5" height="15"/><rect x="11.5" y="0" width="1.5" height="15"/></svg><div class="t" style="left:1697.10px;top:731px;font-size:20px;color:#333;transform:scaleX(0.8961);transform-origin:0 0;">Columns</div><svg width="16" height="14" style="left:1426px;top:832px" fill="#8a8a8a"><rect x="0" y="0" width="16" height="3.5"/><rect x="0" y="5" width="16" height="1.4"/><rect x="0" y="8" width="16" height="1.4"/><rect x="0" y="11" width="16" height="1.4"/></svg><div class="t" style="left:1452.21px;top:831px;font-size:20px;color:#333;transform:scaleX(0.8936);transform-origin:0 0;">Rows</div><svg width="14" height="14" style="left:1672px;top:832px"><path d="M13.5 0 H0.5 L7 7 L0.5 13.5 H13.5" fill="none" stroke="#8a8a8a" stroke-width="1.6"/></svg><div class="t" style="left:1698.00px;top:832px;font-size:20px;color:#333;transform:scaleX(0.8644);transform-origin:0 0;">Values</div><div class="a" style="left:1419px;top:947px;width:18px;height:18px;background:#fff;border:1px solid #6e6e6e"></div><div class="t" style="left:1447.21px;top:948px;font-size:20px;color:#333;transform:scaleX(0.8956);transform-origin:0 0;">Defer Layout Update</div><div class="a" style="left:1832px;top:940px;width:70px;height:35px;background:#fdfdfd"></div><div class="t" style="left:1838.10px;top:949px;font-size:20px;color:#a8a8a8;transform:scaleX(0.9048);transform-origin:0 0;">Update</div><div class="a" style="left:0;top:953px;width:1395px;height:34px;background:#e6e6e6;border-top:1px solid #ababab;box-sizing:border-box"></div><div class="a" style="left:388px;top:953px;width:91px;height:31px;background:#fff;border-left:1px solid #9b9b9b;border-right:1px solid #9b9b9b;box-sizing:border-box"></div><div class="a" style="left:388px;top:982px;width:91px;height:2px;background:#1a6b3c"></div><svg width="8" height="12" style="left:28px;top:964px"><path d="M7 0 V11 L0 5.5Z" fill="#14693a"/></svg><svg width="8" height="12" style="left:63px;top:964px"><path d="M0 0 V11 L7 5.5Z" fill="#14693a"/></svg><div class="a" style="left:93px;top:972px;width:3px;height:3px;background:#185c37"></div><div class="a" style="left:99px;top:972px;width:3px;height:3px;background:#185c37"></div><div class="a" style="left:105px;top:972px;width:3px;height:3px;background:#185c37"></div><div class="a" style="left:118px;top:957px;width:1px;height:26px;background:#9b9b9b"></div><div class="t" style="left:139.00px;top:958px;font-size:20px;color:#333;">Unemployment frequency</div><div class="t" style="left:400.00px;top:958px;font-size:20px;color:#185c37;font-weight:700;">Sheet2</div><div class="t" style="left:496.03px;top:959px;font-size:20px;color:#333;transform:scaleX(0.9864);transform-origin:0 0;">Data for Analysis</div><div class="a" style="left:664px;top:958px;width:1px;height:25px;background:#9b9b9b"></div><div class="t" style="left:679.08px;top:959px;font-size:20px;color:#333;transform:scaleX(0.9577);transform-origin:0 0;">Raw dat</div><div class="a" style="left:758px;top:972px;width:3px;height:3px;background:#185c37"></div><div class="a" style="left:764px;top:972px;width:3px;height:3px;background:#185c37"></div><div class="a" style="left:770px;top:972px;width:3px;height:3px;background:#185c37"></div><svg width="24" height="24" style="left:788px;top:958px" fill="none" stroke="#6e6e6e" stroke-width="1.4"><circle cx="12" cy="12" r="10.5"/><path d="M12 6 V18 M6 12 H18"/></svg><div class="a" style="left:833px;top:962px;width:3px;height:3px;background:#a0a0a0"></div><div class="a" style="left:833px;top:968px;width:3px;height:3px;background:#a0a0a0"></div><div class="a" style="left:833px;top:974px;width:3px;height:3px;background:#a0a0a0"></div><div class="a" style="left:853px;top:957px;width:512px;height:25px;background:#d9d9d9"></div><div class="a" style="left:853px;top:957px;width:24px;height:24px;background:#fff;border:1px solid #ababab;box-sizing:border-box;width:25px;height:25px"></div><svg width="7" height="10" style="left:862px;top:964px"><path d="M6.5 0 V10 L0 5Z" fill="#666"/></svg><div class="a" style="left:878px;top:957px;width:427px;height:25px;background:#fff;border:1px solid #ababab;box-sizing:border-box"></div><div class="a" style="left:1341px;top:957px;width:24px;height:25px;background:#fff;border:1px solid #ababab;box-sizing:border-box"></div><svg width="7" height="10" style="left:1350px;top:964px"><path d="M0 0 V10 L6.5 5Z" fill="#666"/></svg><div class="a" style="left:0;top:987px;width:1920px;height:1px;background:#d0d0d0"></div><div class="a" style="left:0;top:988px;width:1920px;height:32px;background:#f3f2f1"></div><div class="t" style="left:11.12px;top:997px;font-size:17px;color:#444;transform:scaleX(0.8750);transform-origin:0 0;">Ready</div><div class="a" style="left:1474px;top:988px;width:61px;height:32px;background:#d2d0ce"></div><svg width="22" height="21" style="left:1493px;top:993px" fill="none" stroke="#333" stroke-width="1.5"><rect x="0.75" y="0.75" width="20" height="19"/><path d="M7.4 0.75 V19.75 M14 0.75 V19.75 M0.75 7.1 H20.75 M0.75 13.4 H20.75"/></svg><svg width="22" height="21" style="left:1554px;top:993px" fill="none" stroke="#333" stroke-width="1.5"><rect x="0.75" y="0.75" width="20" height="19"/><rect x="4.5" y="4" width="12.5" height="12.5"/><path d="M7 7.5 H14.5 M7 10.5 H14.5 M7 13.5 H14.5" stroke-width="1.1"/></svg><svg width="22" height="21" style="left:1614px;top:993px" fill="none" stroke="#333" stroke-width="1.5"><rect x="0.75" y="0.75" width="20" height="19"/><path d="M6.5 0.75 V10.5 M0.75 10.5 H12.5 V0.75"/></svg><div class="a" style="left:1662px;top:1003px;width:12px;height:1px;background:#555"></div><div class="a" style="left:1683px;top:1003px;width:147px;height:1px;background:#9a9a9a"></div><div class="a" style="left:1752px;top:995px;width:8px;height:18px;background:#6b6b6b"></div><div class="a" style="left:1838px;top:1003px;width:13px;height:1px;background:#555"></div><div class="a" style="left:1844px;top:997px;width:1px;height:13px;background:#555"></div><div class="t" style="left:1868.07px;top:996px;font-size:17px;color:#555;transform:scaleX(0.9286);transform-origin:0 0;">100%</div><div class="a" style="left:0;top:1020px;width:1920px;height:10px;background:linear-gradient(90deg,#e3dad8 0,#e3dad8 72px,#dcdcdc 600px,#e4dcda 980px,#d9d9d9 1190px,#eeeded 1190px,#eeeded 1263px,#d7d6d5 1263px,#dedad9 1800px)"></div><div class="a" style="left:72px;top:1020px;width:514px;height:10px;background:#fff;border-top:1px solid #c8c8c8;border-left:1px solid #d0d0d0;box-sizing:border-box"></div><div class="a" style="left:1474px;top:1020px;width:60px;height:1px;background:#c0bfbe"></div><div class="a" style="left:1912px;top:1020px;width:1px;height:10px;background:#8a8a8a"></div><div class="a" style="left:1740px;top:1027px;width:100px;height:3px;overflow:hidden"><div class="t" style="left:20.00px;top:-1px;font-size:20px;color:#222;transform:scaleX(0.8082);transform-origin:0 0;">4:51 PM</div></div></body></html>
